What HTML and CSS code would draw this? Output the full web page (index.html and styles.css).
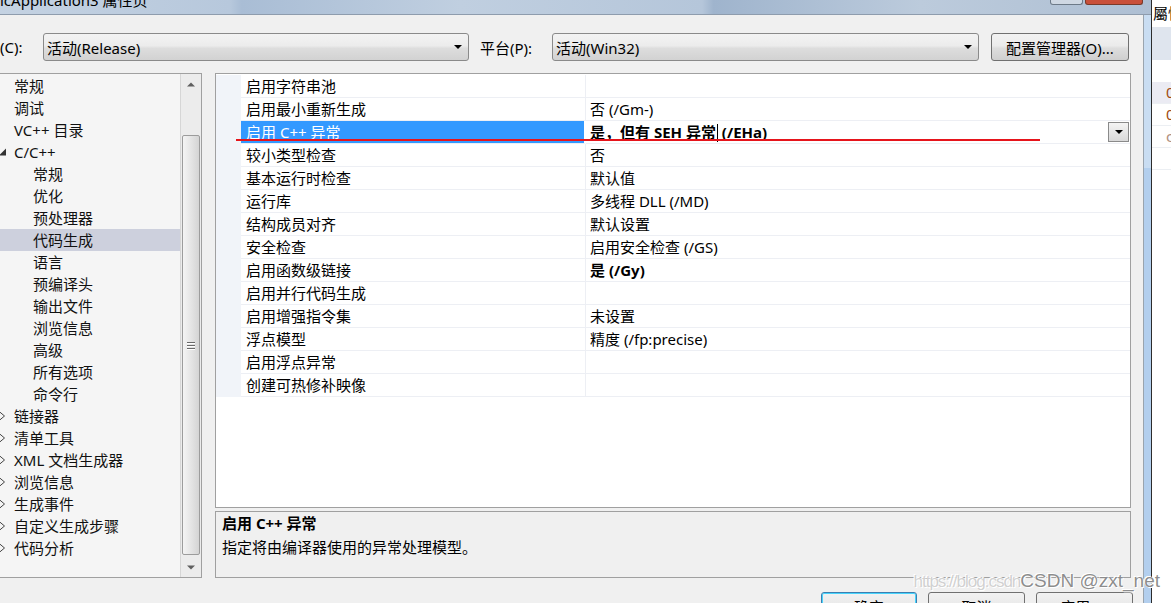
FILE: index.html
```html
<!DOCTYPE html>
<html>
<head>
<meta charset="utf-8">
<title>属性页</title>
<link rel="stylesheet" href="styles.css">
</head>
<body>
<div class="screen">
  <div class="dialog">
    <div class="titlebar">
      <span class="title">icApplication3 属性页</span>
      <div class="caption">
        <span class="cap-btn"></span>
        <span class="cap-close"></span>
      </div>
    </div>
    <div class="dlg">
      <div class="client">
        <div class="toolbar">
          <span class="lbl lbl-c">(C):</span>
          <div class="combo combo-cfg"><span>活动(Release)</span><svg class="dd" width="8" height="4" viewBox="0 0 8 4"><path d="M0 0H8L4 4Z" fill="#000"/></svg></div>
          <span class="lbl lbl-p">平台(P):</span>
          <div class="combo combo-plat"><span>活动(Win32)</span><svg class="dd" width="8" height="4" viewBox="0 0 8 4"><path d="M0 0H8L4 4Z" fill="#000"/></svg></div>
          <div class="btn btn-cfgmgr">配置管理器(O)...</div>
        </div>

        <div class="panes">
          <div class="tree">
            <ul class="tree-list">
              <li class="ti l1"><span class="tw"></span><span>常规</span></li>
              <li class="ti l1"><span class="tw"></span><span>调试</span></li>
              <li class="ti l1"><span class="tw"></span><span>VC++ 目录</span></li>
              <li class="ti l1"><svg class="tw" width="14" height="22" viewBox="0 0 14 22"><path d="M-1 14.5H6V7.5Z" fill="#333"/></svg><span>C/C++</span></li>
              <li class="ti l2"><span>常规</span></li>
              <li class="ti l2"><span>优化</span></li>
              <li class="ti l2"><span>预处理器</span></li>
              <li class="ti l2 sel"><span>代码生成</span></li>
              <li class="ti l2"><span>语言</span></li>
              <li class="ti l2"><span>预编译头</span></li>
              <li class="ti l2"><span>输出文件</span></li>
              <li class="ti l2"><span>浏览信息</span></li>
              <li class="ti l2"><span>高级</span></li>
              <li class="ti l2"><span>所有选项</span></li>
              <li class="ti l2"><span>命令行</span></li>
              <li class="ti l1"><svg class="tw" width="14" height="22" viewBox="0 0 14 22"><path d="M-2 5.5L4.5 11L-2 16.5" fill="none" stroke="#444" stroke-width="1"/></svg><span>链接器</span></li>
              <li class="ti l1"><svg class="tw" width="14" height="22" viewBox="0 0 14 22"><path d="M-2 5.5L4.5 11L-2 16.5" fill="none" stroke="#444" stroke-width="1"/></svg><span>清单工具</span></li>
              <li class="ti l1"><svg class="tw" width="14" height="22" viewBox="0 0 14 22"><path d="M-2 5.5L4.5 11L-2 16.5" fill="none" stroke="#444" stroke-width="1"/></svg><span>XML 文档生成器</span></li>
              <li class="ti l1"><svg class="tw" width="14" height="22" viewBox="0 0 14 22"><path d="M-2 5.5L4.5 11L-2 16.5" fill="none" stroke="#444" stroke-width="1"/></svg><span>浏览信息</span></li>
              <li class="ti l1"><svg class="tw" width="14" height="22" viewBox="0 0 14 22"><path d="M-2 5.5L4.5 11L-2 16.5" fill="none" stroke="#444" stroke-width="1"/></svg><span>生成事件</span></li>
              <li class="ti l1"><svg class="tw" width="14" height="22" viewBox="0 0 14 22"><path d="M-2 5.5L4.5 11L-2 16.5" fill="none" stroke="#444" stroke-width="1"/></svg><span>自定义生成步骤</span></li>
              <li class="ti l1"><svg class="tw" width="14" height="22" viewBox="0 0 14 22"><path d="M-2 5.5L4.5 11L-2 16.5" fill="none" stroke="#444" stroke-width="1"/></svg><span>代码分析</span></li>
            </ul>
            <div class="vscroll">
              <div class="sb-btn sb-up"><svg width="8" height="5" viewBox="0 0 8 5"><path d="M0 4.5H8L4 0.5Z" fill="#5f5f5f"/></svg></div>
              <div class="sb-track">
                <div class="sb-thumb">
                  <span class="grip"></span><span class="grip"></span><span class="grip"></span>
                </div>
              </div>
              <div class="sb-btn sb-down"><svg width="8" height="5" viewBox="0 0 8 5"><path d="M0 0.5H8L4 4.5Z" fill="#5f5f5f"/></svg></div>
            </div>
          </div>

          <div class="right">
            <div class="grid">
              <div class="rows">
                <div class="row"><div class="gut"></div><div class="name">启用字符串池</div><div class="val"></div></div>
                <div class="row"><div class="gut"></div><div class="name">启用最小重新生成</div><div class="val">否 (/Gm-)</div></div>
                <div class="row row-sel"><div class="gut"></div><div class="name">启用 C++ 异常</div><div class="val"><span class="b">是，但有 SEH 异常<span class="caret"></span> (/EHa)</span><span class="cell-dd"><svg width="8" height="4" viewBox="0 0 8 4"><path d="M0 0H8L4 4Z" fill="#000"/></svg></span></div></div>
                <div class="row"><div class="gut"></div><div class="name">较小类型检查</div><div class="val">否</div></div>
                <div class="row"><div class="gut"></div><div class="name">基本运行时检查</div><div class="val">默认值</div></div>
                <div class="row"><div class="gut"></div><div class="name">运行库</div><div class="val">多线程 DLL (/MD)</div></div>
                <div class="row"><div class="gut"></div><div class="name">结构成员对齐</div><div class="val">默认设置</div></div>
                <div class="row"><div class="gut"></div><div class="name">安全检查</div><div class="val">启用安全检查 (/GS)</div></div>
                <div class="row"><div class="gut"></div><div class="name">启用函数级链接</div><div class="val"><span class="b">是 (/Gy)</span></div></div>
                <div class="row"><div class="gut"></div><div class="name">启用并行代码生成</div><div class="val"></div></div>
                <div class="row"><div class="gut"></div><div class="name">启用增强指令集</div><div class="val">未设置</div></div>
                <div class="row"><div class="gut"></div><div class="name">浮点模型</div><div class="val">精度 (/fp:precise)</div></div>
                <div class="row"><div class="gut"></div><div class="name">启用浮点异常</div><div class="val"></div></div>
                <div class="row"><div class="gut"></div><div class="name">创建可热修补映像</div><div class="val"></div></div>
              </div>
            </div>
            <div class="desc">
              <div class="desc-title">启用 C++ 异常</div>
              <div class="desc-text">指定将由编译器使用的异常处理模型。</div>
            </div>
          </div>
        </div>

        <div class="footer">
          <div class="btn fbtn ok">确定</div>
          <div class="btn fbtn">取消</div>
          <div class="btn fbtn">应用(A)</div>
        </div>
      </div>
      <div class="frame"><div class="frame-lo"></div></div>
    </div>
  </div>
  <div class="side">
    <div class="side-head">屬性</div>
    <div class="side-band"></div>
    <div class="side-gap"></div>
    <div class="side-row shade">0</div>
    <div class="side-row">0</div>
    <div class="side-row light">c</div>
    <div class="side-row"></div>
  </div>
</div>
<div class="redline"></div>
<div class="watermark"><span class="wm1">https://blog.csdn</span><span class="wm2">CSDN @zxt_net</span></div>
</body>
</html>
```

FILE: styles.css
```css
* { box-sizing: border-box; margin: 0; padding: 0; }
html, body { width: 1171px; height: 603px; overflow: hidden; }
body {
  position: relative;
  background: #f0f0f0;
  font-family: "Noto Sans", "Noto Sans CJK SC", sans-serif;
  font-size: 15px;
  color: #000;
}
.screen { display: flex; height: 603px; }
.dialog { width: 1151px; display: flex; flex-direction: column; }

/* title bar */
.titlebar {
  height: 15px;
  flex: none;
  display: flex;
  justify-content: space-between;
  overflow: hidden;
  background: linear-gradient(90deg, #c4d2e2 0%, #b7c8dc 20%, #a9bdd5 21%, #c0cfe0 40%, #b5c6da 61%, #9fb4cd 62%, #bccbdc 80%, #aebfd3 100%);
  border-bottom: 1px solid #8e9cad;
}
.title { display: block; line-height: 15px; margin-top: -7px; font-size: 15px; color: #000; white-space: nowrap; }
.caption { display: flex; align-items: flex-start; padding-right: 8px; }
.cap-btn { width: 33px; height: 5px; border: 1px solid #6d7a88; border-top: 0; border-radius: 0 0 3px 3px; background: #cfd8e3; margin-right: 2px; }
.cap-close { width: 58px; height: 5px; border: 1px solid #7a3a2a; border-top: 0; border-radius: 0 0 3px 3px; background: #c9503a; }

.dlg { flex: 1; display: flex; }
.client {
  width: 1144px;
  background: #f0f0f0;
  border-right: 1px solid #9aa4ae;
  display: flex;
  flex-direction: column;
}
.frame { width: 7px; background: #c9ddf2; display: flex; flex-direction: column; }
.frame-lo { margin-top: 153px; flex: 1; background: #b3cfee; }

/* toolbar */
.toolbar { display: flex; align-items: center; height: 28px; margin-top: 18px; }
.lbl { white-space: nowrap; }
.lbl-c { width: 43px; }
.lbl-p { width: 72px; margin-left: 11px; }
.combo {
  height: 28px;
  display: flex;
  align-items: center;
  justify-content: space-between;
  padding: 0 6px 0 3px;
  border: 1px solid #8a8a8a;
  border-radius: 3px;
  background: linear-gradient(#f3f3f3 0%, #ececec 45%, #dddddd 55%, #d2d2d2 100%);
}
.combo-cfg { width: 426px; }
.combo-plat { width: 427px; }
.btn {
  height: 28px;
  display: flex;
  align-items: center;
  justify-content: center;
  border: 1px solid #707070;
  border-radius: 3px;
  background: linear-gradient(#f2f2f2 0%, #ebebeb 45%, #dddddd 55%, #cfcfcf 100%);
  white-space: nowrap;
}
.btn-cfgmgr { width: 138px; margin-left: 12px; }

/* panes */
.panes { display: flex; height: 505px; margin-top: 12px; }
.tree {
  width: 202px;
  display: flex;
  background: #f5f5f5;
  border: 1px solid #a0a0a0;
  border-left: 0;
}
.tree-list { list-style: none; width: 180px; padding-top: 1px; overflow: hidden; }
.ti { height: 22px; line-height: 22px; display: flex; align-items: center; white-space: nowrap; color: #111; }
.ti.l2 { padding-left: 33px; }
.tw { width: 14px; height: 22px; flex: none; display: block; }
.ti.sel { background: #cdd0dd; }

.vscroll {
  width: 21px;
  display: flex;
  flex-direction: column;
  border-left: 1px solid #d6d6d6;
  background: #ececec;
}
.sb-btn { display: flex; align-items: center; justify-content: center; flex: none; }
.sb-up { height: 17px; padding-top: 4px; }
.sb-down { height: 20px; }
.sb-track { flex: 1; padding-top: 44px; padding-left: 1px; }
.sb-thumb {
  width: 18px;
  height: 420px;
  border: 1px solid #9c9c9c;
  border-radius: 2px;
  background: linear-gradient(90deg, #f4f4f4 0%, #e8e8e8 40%, #d4d4d4 100%);
  display: flex;
  flex-direction: column;
  align-items: center;
  justify-content: center;
  gap: 2px;
}
.grip { width: 8px; height: 1px; background: #6a6a6a; box-shadow: 0 1px 0 #fff; }

.right { width: 916px; margin-left: 13px; display: flex; flex-direction: column; }
.grid { height: 435px; border: 1px solid #a0a0a0; background: #fff; }
.rows { padding-top: 1px; }
.row { display: flex; height: 23px; }
.gut { width: 25px; background: #f1f4f9; flex: none; }
.name {
  width: 345px;
  padding-left: 5px;
  line-height: 22px;
  border-bottom: 1px solid #edeff4;
  border-right: 1px solid #edeff4;
  white-space: nowrap;
}
.val {
  flex: 1;
  padding-left: 4px;
  line-height: 22px;
  border-bottom: 1px solid #edeff4;
  display: flex;
  justify-content: space-between;
  align-items: center;
  white-space: nowrap;
}
.row-sel .name { background: #3399ff; color: #fff; border-right: 2px solid #fff; }
.b { font-weight: bold; }
.caret { display: inline-block; width: 1px; height: 18px; background: #000; vertical-align: -4px; margin-left: 1px; }
.cell-dd {
  width: 21px;
  height: 20px;
  margin-right: 1px;
  border: 1px solid #8a8a8a;
  background: linear-gradient(#f4f4f4, #d9d9d9);
  display: flex;
  align-items: center;
  justify-content: center;
}

.desc { height: 67px; margin-top: 3px; border: 1px solid #a0a0a0; background: #f0f0f0; padding-left: 6px; }
.desc-title { line-height: 22px; font-weight: bold; }
.desc-text { line-height: 22px; margin-top: 2px; }

.footer { display: flex; justify-content: flex-end; gap: 11px; padding-right: 10px; margin-top: 14px; }
.fbtn { width: 97px; height: 24px; align-items: flex-start; padding-top: 3px; border-radius: 3px; }
.fbtn.ok { width: 96px; border-color: #3c7fb1; box-shadow: inset 0 0 0 1px #48d4fc; }

/* side window */
.side { flex: 1; background: #fff; border-left: 1px solid #2c2c2c; overflow: hidden; }
.side-head { height: 27px; line-height: 26px; padding-left: 1px; white-space: nowrap; font-size: 15px; }
.side-band { height: 33px; background: #dfe5ee; }
.side-gap { height: 22px; }
.side-row { height: 22px; line-height: 21px; padding-left: 14px; border-bottom: 1px solid #eceff3; color: #a04a10; white-space: nowrap; }
.side-row.shade { background: #ebebf3; }
.side-row.light { color: #b09080; }

/* overlays */
.redline { position: absolute; left: 236px; top: 139px; width: 804px; height: 2px; background: #e6141b; }
.watermark {
  position: absolute;
  right: 11px;
  top: 570px;
  font-family: "Liberation Sans", Arial, sans-serif;
  white-space: nowrap;
  text-shadow: 0 0 1px #fff, 1px 1px 0 #fff, -1px -1px 0 #fff;
}
.wm1 { font-size: 17px; letter-spacing: -1px; color: rgba(170, 170, 170, 0.55); }
.wm2 { font-size: 19px; color: rgba(120, 120, 120, 0.85); }
```
